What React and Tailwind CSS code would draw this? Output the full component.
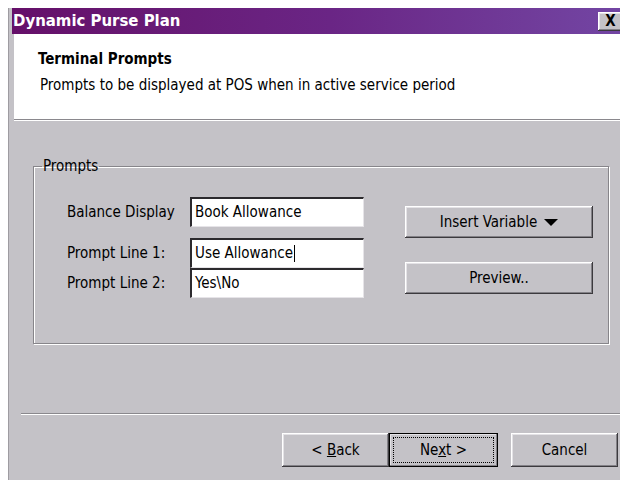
import React from 'react';

// classic raised 3D bevel used by push buttons
const raised =
  'shadow-[inset_-1px_-1px_0_#3c3a3e,inset_1px_1px_0_#ffffff,inset_-2px_-2px_0_#838187,inset_2px_2px_0_#e4e2e6]';

const Button = ({ children, className = '', isDefault = false }) => (
  <div
    className={`flex items-stretch bg-[#c4c2c7] text-black ${raised} ${
      isDefault ? 'outline outline-1 outline-black -outline-offset-1' : ''
    } ${className}`}
  >
    <span
      className={`flex flex-1 items-center justify-center m-[4px] ${
        isDefault ? 'border border-dotted border-black' : 'border border-transparent'
      }`}
    >
      {children}
    </span>
  </div>
);

const TextBox = ({ value, caret = false }) => (
  <div className="h-[30px] w-[174px] bg-white flex items-center pl-[3px] border-t-2 border-l-2 border-t-[#2c2a2e] border-l-[#2c2a2e] border-b border-r border-b-[#e6e4e8] border-r-[#e6e4e8] whitespace-pre">
    {value}
    {caret && <span className="inline-block w-[1px] h-[17px] bg-black ml-[1px]" />}
  </div>
);

export default function App() {
  return (
    <div
      className="w-[620px] h-[480px] overflow-hidden bg-white flex pl-[8px] pt-[8px] text-[15px] text-black"
      style={{ fontFamily: '"DejaVu Sans Condensed", "Liberation Sans", sans-serif' }}
    >
      <div className="flex flex-col w-[640px] shrink-0 bg-[#c4c2c7] border-l border-[#9e9ca1] pl-[3px]">
        {/* title bar */}
        <div className="h-[26px] flex items-center bg-gradient-to-r from-[#650f69] via-[#6a2585] to-[#7348a6] pl-[1px]">
          <span className="text-white font-bold text-[16.6px]">Dynamic Purse Plan</span>
          <div className={`ml-[418px] mt-[1px] h-[19px] w-[24px] bg-[#c4c2c7] flex items-center justify-center font-bold text-[15px] ${raised}`}>
            X
          </div>
        </div>

        {/* wizard header */}
        <div className="ml-[2px] h-[86px] bg-white border-b border-[#8a888d] shadow-[0_1px_0_#ffffff] flex flex-col pl-[24px] pt-[15px]">
          <span className="font-bold leading-[20px]">Terminal Prompts</span>
          <span className="pl-[2px] mt-[6px] leading-[20px]">
            Prompts to be displayed at POS when in active service period
          </span>
        </div>

        {/* prompts group */}
        <fieldset className="ml-[21px] mt-[37px] w-[576px] h-[187px] border border-[#87858a] shadow-[inset_1px_1px_0_#ffffff,1px_1px_0_#ffffff]">
          <legend className="ml-[8px] px-[1px] leading-[18px]">Prompts</legend>
          <div className="flex pl-[33px] pt-[22px]">
            <div className="grid grid-cols-[123px_174px]">
              <span className="h-[30px] flex items-center">Balance Display</span>
              <TextBox value="Book Allowance" />
              <span className="h-[30px] mt-[11px] flex items-center">Prompt Line 1:</span>
              <div className="mt-[11px]">
                <TextBox value="Use Allowance" caret />
              </div>
              <span className="h-[30px] flex items-center">Prompt Line 2:</span>
              <TextBox value="Yes\No" />
            </div>
            <div className="flex flex-col ml-[41px] pt-[9px] gap-[24px]">
              <Button className="w-[188px] h-[32px]">
                <span className="flex items-center gap-[7px]">
                  Insert Variable
                  <svg width="14" height="7" viewBox="0 0 14 7">
                    <path d="M0 0H14L7 7Z" fill="#000" />
                  </svg>
                </span>
              </Button>
              <Button className="w-[188px] h-[32px]">Preview..</Button>
            </div>
          </div>
        </fieldset>

        {/* separator */}
        <div className="ml-[9px] mt-[69px] h-[2px] border-t border-[#8a888d] border-b border-b-white" />

        {/* navigation buttons */}
        <div className="flex ml-[270px] mt-[18px]">
          <Button className="w-[107px] h-[34px]">
            <span>
              &lt; <u>B</u>ack
            </span>
          </Button>
          <Button isDefault className="w-[109px] h-[34px]">
            <span>
              Ne<u>x</u>t &gt;
            </span>
          </Button>
          <Button className="ml-[13px] w-[107px] h-[34px]">Cancel</Button>
        </div>
      </div>
    </div>
  );
}
